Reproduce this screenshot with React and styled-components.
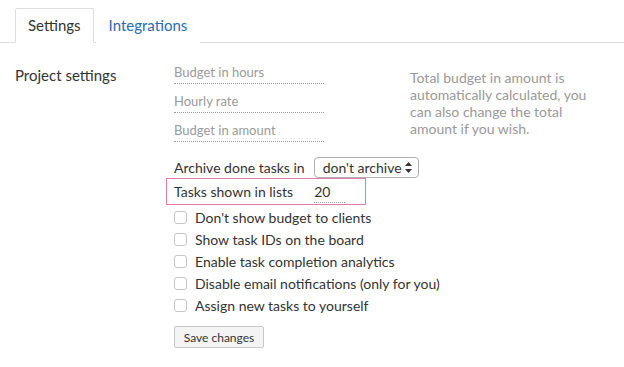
import styled, { createGlobalStyle } from 'styled-components';

const GlobalStyle = createGlobalStyle`
	html, body {
		margin: 0;
		padding: 0;
		background: #ffffff;
	}

	body {
		font-family: Lato, 'Liberation Sans', sans-serif;
		color: #333333;
	}
`;

const Page = styled.div`
	width: 624px;
	height: 367px;
	overflow: hidden;
`;

const TabBar = styled.div`
	display: flex;
	align-items: flex-end;
	gap: 2px;
	padding: 7px 0 0 15px;
	border-bottom: 1px solid #dddddd;
	height: 35px;
	box-sizing: content-box;
`;

const Tab = styled.div`
	height: 35px;
	box-sizing: border-box;
	display: flex;
	align-items: center;
	padding: 0 12px 1px 12px;
	font-size: 15px;
	margin-bottom: -1px;
	border: 1px solid ${({ $active }) => ($active ? '#dddddd' : 'transparent')};
	border-bottom-color: ${({ $active }) => ($active ? '#ffffff' : 'transparent')};
	border-radius: 2px 2px 0 0;
	background: #ffffff;
	color: ${({ $active }) => ($active ? '#333333' : '#2a6ab3')};
`;

const Section = styled.div`
	display: flex;
	padding: 18px 0 0 15px;
`;

const SectionTitle = styled.div`
	width: 159px;
	font-size: 15px;
	line-height: 22px;
	padding-top: 3px;
`;

const Form = styled.div`
	display: flex;
	flex-direction: column;
`;

const BudgetRow = styled.div`
	display: flex;
	gap: 86px;
`;

const BudgetInputs = styled.div`
	display: flex;
	flex-direction: column;
	gap: 6px;
	width: 150px;
`;

const DottedInput = styled.input`
	font-family: inherit;
	font-size: ${({ $size }) => $size || '13px'};
	color: #333333;
	border: none;
	border-bottom: 1px dotted #9a9a9a;
	outline: none;
	padding: 0;
	height: 22px;
	width: ${({ $width }) => $width || '150px'};
	background: transparent;

	&::placeholder {
		color: #9a9a9a;
	}
`;

const HelpText = styled.p`
	margin: 8px 0 0;
	width: 186px;
	font-size: 14px;
	line-height: 17px;
	color: #999999;
`;

const OptionRow = styled.div`
	display: flex;
	align-items: center;
	font-size: 14px;
	height: 22px;
`;

const ArchiveRow = styled(OptionRow)`
	margin-top: 15px;
	height: 21px;
	gap: 9px;
`;

const Highlight = styled(OptionRow)`
	margin-left: -8px;
	width: 200px;
	height: 27px;
	box-sizing: border-box;
	padding-left: 7px;
	border: 1px solid #e27bab;
	gap: 21px;
	margin-bottom: 1px;
`;

const SelectWrap = styled.div`
	position: relative;
	display: flex;
`;

const Select = styled.select`
	appearance: none;
	font-family: inherit;
	font-size: 14px;
	color: #333333;
	width: 105px;
	height: 21px;
	padding: 0 0 0 8px;
	border: 1px solid #b0b0b0;
	border-radius: 4px;
	background: #ffffff;
`;

const SelectArrows = styled.svg`
	position: absolute;
	right: 7px;
	top: 5px;
	pointer-events: none;
`;

const Checkbox = styled.input`
	appearance: none;
	width: 13px;
	height: 13px;
	margin: 0 8px 0 0;
	border: 1px solid #c6c6c6;
	border-radius: 3px;
	background: #ffffff;
	box-sizing: border-box;
`;

const CheckLabel = styled.label`
	display: flex;
	align-items: center;
	font-size: 14px;
	height: 22px;
`;

const SaveButton = styled.button`
	margin-top: 10px;
	align-self: flex-start;
	font-family: inherit;
	font-size: 12px;
	color: #333333;
	width: 90px;
	height: 22px;
	padding: 0;
	border: 1px solid #c8c8c8;
	border-radius: 2px;
	background: #f4f4f4;
`;

const options = [
	"Don't show budget to clients",
	'Show task IDs on the board',
	'Enable task completion analytics',
	'Disable email notifications (only for you)',
	'Assign new tasks to yourself',
];

export default function App() {
	return (
		<Page>
			<GlobalStyle />
			<TabBar>
				<Tab $active>Settings</Tab>
				<Tab>Integrations</Tab>
			</TabBar>
			<Section>
				<SectionTitle>Project settings</SectionTitle>
				<Form>
					<BudgetRow>
						<BudgetInputs>
							<DottedInput placeholder="Budget in hours" />
							<DottedInput placeholder="Hourly rate" />
							<DottedInput placeholder="Budget in amount" />
						</BudgetInputs>
						<HelpText>
							Total budget in amount is automatically calculated, you
							can also change the total amount if you wish.
						</HelpText>
					</BudgetRow>
					<ArchiveRow>
						Archive done tasks in
						<SelectWrap>
							<Select defaultValue="none">
								<option value="none">don't archive</option>
							</Select>
							<SelectArrows width="7" height="11" viewBox="0 0 7 11">
								<path d="M3.5 0 L7 4 H0 Z" fill="#333" />
								<path d="M3.5 11 L7 7 H0 Z" fill="#333" />
							</SelectArrows>
						</SelectWrap>
					</ArchiveRow>
					<Highlight>
						Tasks shown in lists
						<DottedInput defaultValue="20" $width="31px" $size="14px" />
					</Highlight>
					{options.map((label) => (
						<CheckLabel key={label}>
							<Checkbox type="checkbox" />
							{label}
						</CheckLabel>
					))}
					<SaveButton>Save changes</SaveButton>
				</Form>
			</Section>
		</Page>
	);
}
